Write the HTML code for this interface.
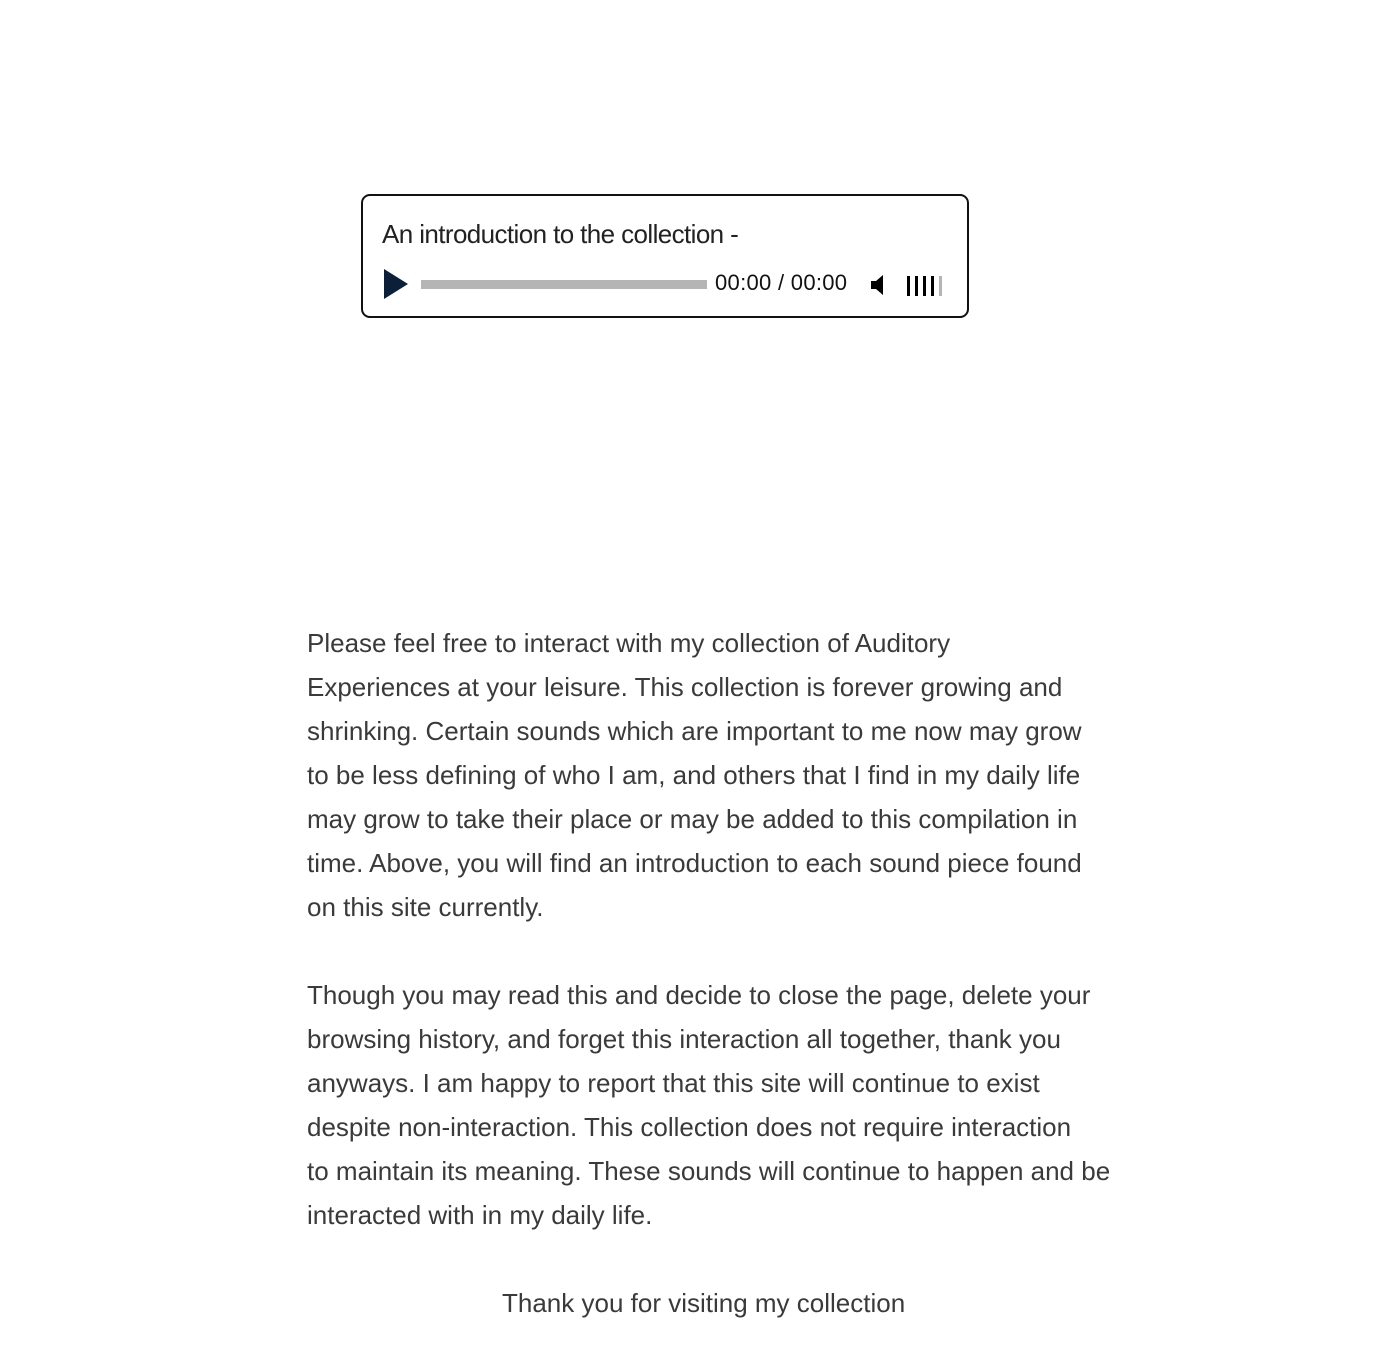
<!DOCTYPE html>
<html><head><meta charset="utf-8"><style>
body{margin:0;background:#fff;width:1394px;height:1361px;position:relative;font-family:"Liberation Sans",sans-serif;overflow:hidden}
.box{position:absolute;left:361px;top:194px;width:604px;height:120px;border:2px solid #111;border-radius:9px}
.title{position:absolute;left:382px;top:219px;font-size:26px;color:#222;white-space:nowrap;letter-spacing:-0.6px}
.play{position:absolute;left:384px;top:269px;width:0;height:0;border-left:24px solid #0c1f38;border-top:15px solid transparent;border-bottom:15px solid transparent}
.bar{position:absolute;left:421px;top:280px;width:286px;height:9px;background:#b5b5b5}
.time{position:absolute;left:715px;top:270px;font-size:22px;color:#111;white-space:nowrap;letter-spacing:0.3px}
.vol{position:absolute;left:905px;top:276px}
.vol span{position:absolute;top:0;width:3px;height:20px;background:#000}
.p{position:absolute;left:307px;font-size:26px;color:#3a3a3a;line-height:44px;white-space:nowrap;letter-spacing:0px}
</style></head><body>
<div class="box"></div>
<div class="title">An introduction to the collection -</div>
<div class="play"></div>
<div class="bar"></div>
<div class="time">00:00 / 00:00</div>
<svg style="position:absolute;left:870px;top:272px" width="20" height="26" viewBox="0 0 20 26"><path d="M1 9h5l7-6v20l-7-6H1z" fill="#000"/></svg>
<div class="vol"><span style="left:2px"></span><span style="left:10px"></span><span style="left:18px"></span><span style="left:26px"></span><span style="left:34px;background:#b5b5b5"></span></div>
<div class="p" style="top:621px">Please feel free to interact with my collection of Auditory<br>Experiences at your leisure. This collection is forever growing and<br>shrinking. Certain sounds which are important to me now may grow<br>to be less defining of who I am, and others that I find in my daily life<br>may grow to take their place or may be added to this compilation in<br>time. Above, you will find an introduction to each sound piece found<br>on this site currently.</div>
<div class="p" style="top:973px">Though you may read this and decide to close the page, delete your<br>browsing history, and forget this interaction all together, thank you<br>anyways. I am happy to report that this site will continue to exist<br>despite non-interaction. This collection does not require interaction<br>to maintain its meaning. These sounds will continue to happen and be<br>interacted with in my daily life.</div>
<div class="p" style="top:1281px;left:502px">Thank you for visiting my collection</div>
</body></html>
